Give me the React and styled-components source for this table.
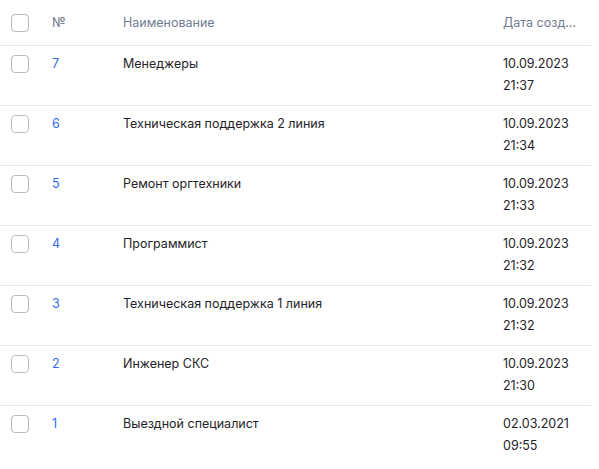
import styled, { createGlobalStyle } from 'styled-components';

const GlobalStyle = createGlobalStyle`
  body {
    margin: 0;
    background: #fff;
    font-family: Inter, "Noto Sans", sans-serif;
  }
`

const Table = styled.div`
  width: 591px;
  font-size: 12.5px;
  color: #1f2329;
`

const Row = styled.div`
  display: grid;
  grid-template-columns: 42px 71px 380px 98px;
  height: ${(p) => (p.$head ? '45px' : '59px')};
  align-items: ${(p) => (p.$head ? 'center' : 'start')};
  border-bottom: 1px solid #e6e8ef;

  &:last-child {
    border-bottom: none;
  }
`

const Cell = styled.div`
  padding: ${(p) => (p.$head ? '0 10px' : '7px 10px 0')};
  line-height: 22px;
  color: ${(p) => (p.$head ? '#6f7b8f' : p.$link ? '#2f6bf0' : '#1f2329')};
  white-space: ${(p) => (p.$head ? 'nowrap' : 'normal')};
`

const CheckCell = styled.div`
  padding: ${(p) => (p.$head ? '0 0 0 11px' : '9px 0 0 11px')};
  display: flex;
`

const Check = styled.span`
  width: 16px;
  height: 16px;
  border: 1px solid #b8bbc0;
  border-radius: 4px;
  background: #fff;
  display: block;
`

const rows = [
  { id: 7, name: 'Менеджеры', date: '10.09.2023', time: '21:37' },
  { id: 6, name: 'Техническая поддержка 2 линия', date: '10.09.2023', time: '21:34' },
  { id: 5, name: 'Ремонт оргтехники', date: '10.09.2023', time: '21:33' },
  { id: 4, name: 'Программист', date: '10.09.2023', time: '21:32' },
  { id: 3, name: 'Техническая поддержка 1 линия', date: '10.09.2023', time: '21:32' },
  { id: 2, name: 'Инженер СКС', date: '10.09.2023', time: '21:30' },
  { id: 1, name: 'Выездной специалист', date: '02.03.2021', time: '09:55' },
];

export default function App() {
  return (
    <>
      <GlobalStyle />
      <Table>
        <Row $head>
          <CheckCell $head><Check /></CheckCell>
          <Cell $head>№</Cell>
          <Cell $head>Наименование</Cell>
          <Cell $head>Дата созд…</Cell>
        </Row>
        {rows.map((r) => (
          <Row key={r.id}>
            <CheckCell><Check /></CheckCell>
            <Cell $link>{r.id}</Cell>
            <Cell>{r.name}</Cell>
            <Cell>{r.date}<br />{r.time}</Cell>
          </Row>
        ))}
      </Table>
    </>
  );
}
